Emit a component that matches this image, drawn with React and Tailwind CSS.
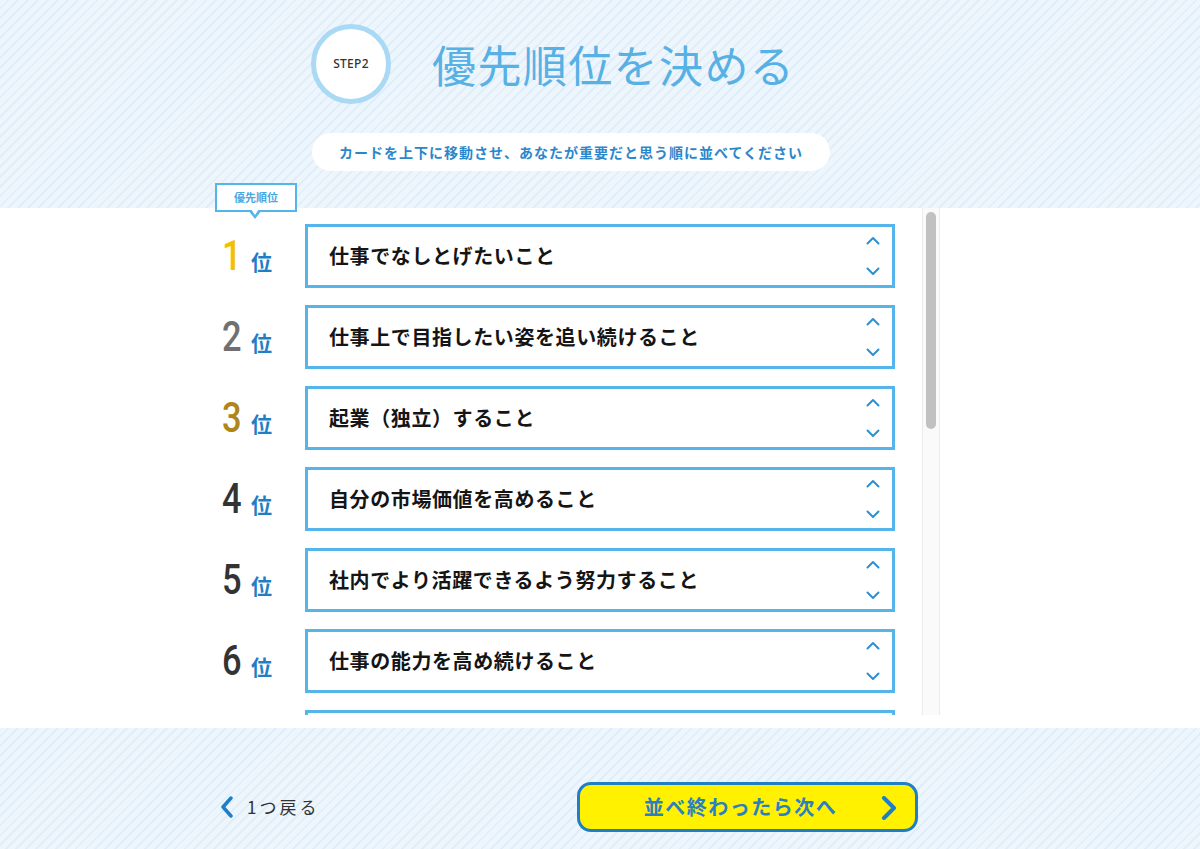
const items = [
  "仕事でなしとげたいこと",
  "仕事上で目指したい姿を追い続けること",
  "起業（独立）すること",
  "自分の市場価値を高めること",
  "社内でより活躍できるよう努力すること",
  "仕事の能力を高め続けること",
  "人間関係を良好に保つこと",
  "安定した収入を得ること",
  "社会に貢献すること",
  "新しいことに挑戦し続けること",
  "専門性を身につけること",
  "プライベートを充実させること",
  "家族との時間を大切にすること",
  "ワークライフバランスを保つこと",
];

const rankColor = (i) => {
  if (i === 0) return "text-[#f5bf00]";
  if (i === 1) return "text-[#707070]";
  if (i === 2) return "text-[#b0861a]";
  return "text-[#333333]";
};

const stripes =
  "bg-[repeating-linear-gradient(135deg,#eef6fd_0px,#eef6fd_5px,#e1eef9_5px,#e1eef9_7px)]";

const Chevron = ({ dir }) => (
  <svg width="14" height="9" viewBox="0 0 14 9" fill="none">
    {dir === "up" ? (
      <polyline points="1.5,7.5 7,2 12.5,7.5" stroke="#2d8fd3" strokeWidth="2" strokeLinecap="round" strokeLinejoin="round" />
    ) : (
      <polyline points="1.5,1.5 7,7 12.5,1.5" stroke="#2d8fd3" strokeWidth="2" strokeLinecap="round" strokeLinejoin="round" />
    )}
  </svg>
);

const Row = ({ text, i }) => (
  <div className="flex items-center h-[64px] mb-[17px]">
    <div className="w-[100px] pl-[17px] flex items-baseline">
      <span
        className={`inline-block w-[22px] text-[42px] font-medium leading-none scale-x-[0.82] origin-left ${rankColor(i)}`}
        style={{ fontFamily: 'Roboto, "DejaVu Sans Condensed", sans-serif' }}
      >
        {i + 1}
      </span>
      <span className="ml-[7px] text-[21px] font-bold text-[#1f7fc6] leading-none">位</span>
    </div>
    <div className="w-[590px] h-[64px] border-[3px] border-[#55b4ea] bg-white flex items-center justify-between pl-[21px] pr-[12px]">
      <p className="text-[20px] font-bold text-[#151515] tracking-[0.6px]">{text}</p>
      <div className="flex flex-col justify-between h-[46px] py-[3px]">
        <Chevron dir="up" />
        <Chevron dir="down" />
      </div>
    </div>
  </div>
);

export default function App() {
  return (
    <div
      className="w-[1200px] h-[849px] overflow-hidden"
      style={{ fontFamily: '"Noto Sans CJK JP", "Noto Sans", sans-serif' }}
    >
      <header className={`h-[208px] ${stripes} pt-[24px]`}>
        <div className="flex items-center pl-[311px]">
          <div className="w-[80px] h-[80px] rounded-full border-[5px] border-[#a9d9f5] bg-white flex items-center justify-center">
            <span className="text-[12px] font-medium text-[#333] tracking-[0.3px]" style={{ fontFamily: '"Noto Sans", sans-serif' }}>
              STEP2
            </span>
          </div>
          <h1 className="ml-[41px] text-[44px] text-[#57b1e5] tracking-[1.4px] leading-none">優先順位を決める</h1>
        </div>
        <div className="pl-[312px] mt-[29px]">
          <div className="w-[518px] h-[38px] rounded-full bg-white flex items-center justify-center">
            <p className="text-[14px] font-bold text-[#2b87cb] tracking-[1px]">
              カードを上下に移動させ、あなたが重要だと思う順に並べてください
            </p>
          </div>
        </div>
      </header>

      <section className="h-[520px] bg-white relative">
        <div className="absolute left-[215px] top-[-25px] z-10">
          <div className="w-[82px] h-[29px] border-2 border-[#55b4ea] bg-white flex items-center justify-center">
            <span className="text-[11px] font-bold text-[#4aa7df]">優先順位</span>
          </div>
          <div className="absolute left-[33px] top-[27px] w-0 h-0 border-l-[7px] border-r-[7px] border-t-[9px] border-l-transparent border-r-transparent border-t-[#55b4ea]" />
          <div className="absolute left-[36px] top-[26px] w-0 h-0 border-l-[4px] border-r-[4px] border-t-[6px] border-l-transparent border-r-transparent border-t-white" />
        </div>
        <div className="flex ml-[205px] h-[507px]">
          <div className="w-[717px] h-full overflow-y-scroll [scrollbar-width:none] pt-[16px] pb-[40px]">
            {items.map((t, i) => (
              <Row key={i} text={t} i={i} />
            ))}
          </div>
          <div className="w-[18px] h-full bg-[#fafafa] border-x border-[#ebebeb] pt-[4px] px-[3px]">
            <div className="h-[217px] rounded-full bg-[#c1c1c1]" />
          </div>
        </div>
      </section>

      <footer className={`h-[121px] ${stripes} flex items-start pt-[54px]`}>
        <div className="w-[577px] pl-[220px] pt-[13px]">
          <button className="flex items-center h-[24px]">
            <svg width="14" height="22" viewBox="0 0 14 22" fill="none">
              <polyline points="11,2 3,11 11,20" stroke="#1f7fc6" strokeWidth="3.5" strokeLinecap="round" strokeLinejoin="round" />
            </svg>
            <span className="ml-[13px] text-[17px] text-[#333] tracking-[3px]">1つ戻る</span>
          </button>
        </div>
        <button className="w-[341px] h-[50px] rounded-[14px] border-[3px] border-[#1f7fc6] bg-[#fff100] relative flex items-center justify-center">
          <span className="text-[20px] font-bold text-[#2a80c2] tracking-[1.5px] mr-[14px]">並べ終わったら次へ</span>
          <svg className="absolute right-[16px] top-[11px]" width="20" height="24" viewBox="0 0 20 24" fill="none">
            <polyline points="5,2 15,12 5,22" stroke="#1f7fc6" strokeWidth="4" strokeLinecap="round" strokeLinejoin="round" />
          </svg>
        </button>
      </footer>
    </div>
  );
}
